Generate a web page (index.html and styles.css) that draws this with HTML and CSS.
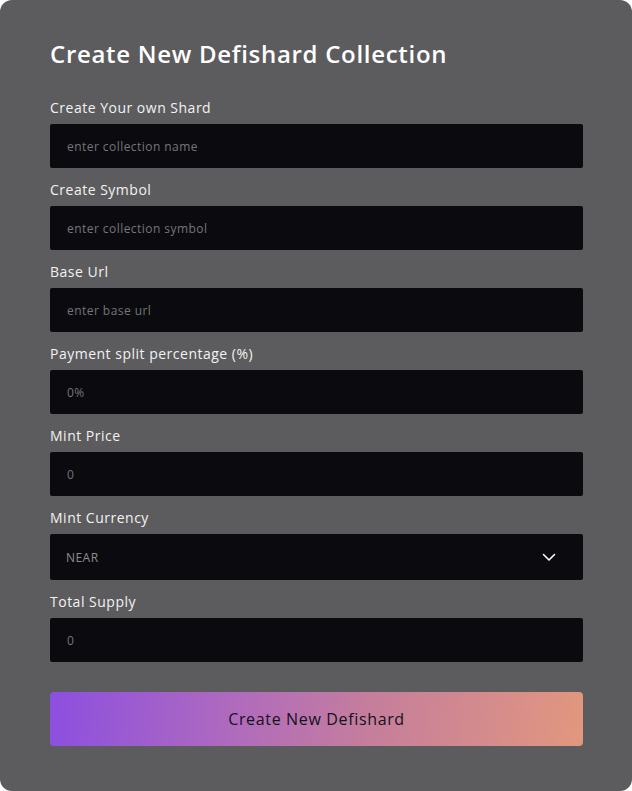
FILE: index.html
```html
<!DOCTYPE html>
<html lang="en">
<head>
<meta charset="utf-8">
<title>Create New Defishard Collection</title>
<link rel="stylesheet" href="styles.css">
</head>
<body>
<form class="card">
  <h1 class="title">Create New Defishard Collection</h1>
  <div class="fields">
    <label class="field">
      <span class="label">Create Your own Shard</span>
      <span class="input"><span class="ph">enter collection name</span></span>
    </label>
    <label class="field">
      <span class="label">Create Symbol</span>
      <span class="input"><span class="ph">enter collection symbol</span></span>
    </label>
    <label class="field">
      <span class="label">Base Url</span>
      <span class="input"><span class="ph">enter base url</span></span>
    </label>
    <label class="field">
      <span class="label">Payment split percentage (%)</span>
      <span class="input"><span class="ph">0%</span></span>
    </label>
    <label class="field">
      <span class="label">Mint Price</span>
      <span class="input"><span class="ph">0</span></span>
    </label>
    <label class="field">
      <span class="label">Mint Currency</span>
      <span class="input select"><span class="ph val">NEAR</span>
        <svg class="chev" width="16" height="16" viewBox="0 0 16 16" aria-hidden="true"><path d="M2.5 5.5 L8 11 L13.5 5.5" fill="none" stroke="#ffffff" stroke-width="1.6" stroke-linecap="round" stroke-linejoin="round"/></svg>
      </span>
    </label>
    <label class="field">
      <span class="label">Total Supply</span>
      <span class="input"><span class="ph">0</span></span>
    </label>
  </div>
  <button type="button" class="btn">Create New Defishard</button>
</form>
</body>
</html>
```

FILE: styles.css
```css
html, body {
  margin: 0;
  padding: 0;
  background: #ffffff;
}
body {
  font-family: "Open Sans", "Liberation Sans", sans-serif;
}
.card {
  box-sizing: border-box;
  width: 632px;
  height: 791px;
  background: #5c5c5e;
  border-radius: 12px;
  padding: 38px 49px 0 50px;
  display: flex;
  flex-direction: column;
}
.title {
  margin: 0;
  color: #ffffff;
  font-size: 24px;
  font-weight: 600;
  line-height: 32px;
  letter-spacing: 0.7px;
}
.fields {
  margin-top: 28px;
  display: flex;
  flex-direction: column;
  gap: 12px;
}
.field {
  display: flex;
  flex-direction: column;
  gap: 6px;
}
.label {
  color: #f2f2f2;
  font-size: 14px;
  line-height: 20px;
  letter-spacing: 0.5px;
}
.input {
  box-sizing: border-box;
  height: 44px;
  background: #0b0b0f;
  border-radius: 2px;
  padding: 0 17px;
  display: flex;
  align-items: center;
}
.ph {
  color: #75757a;
  font-size: 12px;
  letter-spacing: 0.45px;
}
.select {
  height: 46px;
  justify-content: space-between;
  padding: 0 26px 0 16px;
}
.val {
  color: #8c8c90;
}
.chev {
  display: block;
}
.btn {
  margin-top: 30px;
  height: 54px;
  border: 0;
  border-radius: 4px;
  background: linear-gradient(95deg, #8c4fe0 0%, #b06bbd 35%, #c57e9c 60%, #e2977e 100%);
  color: #14111c;
  font-family: "Open Sans", "Liberation Sans", sans-serif;
  font-size: 16px;
  font-weight: 500;
  letter-spacing: 0.65px;
  cursor: pointer;
}
```
